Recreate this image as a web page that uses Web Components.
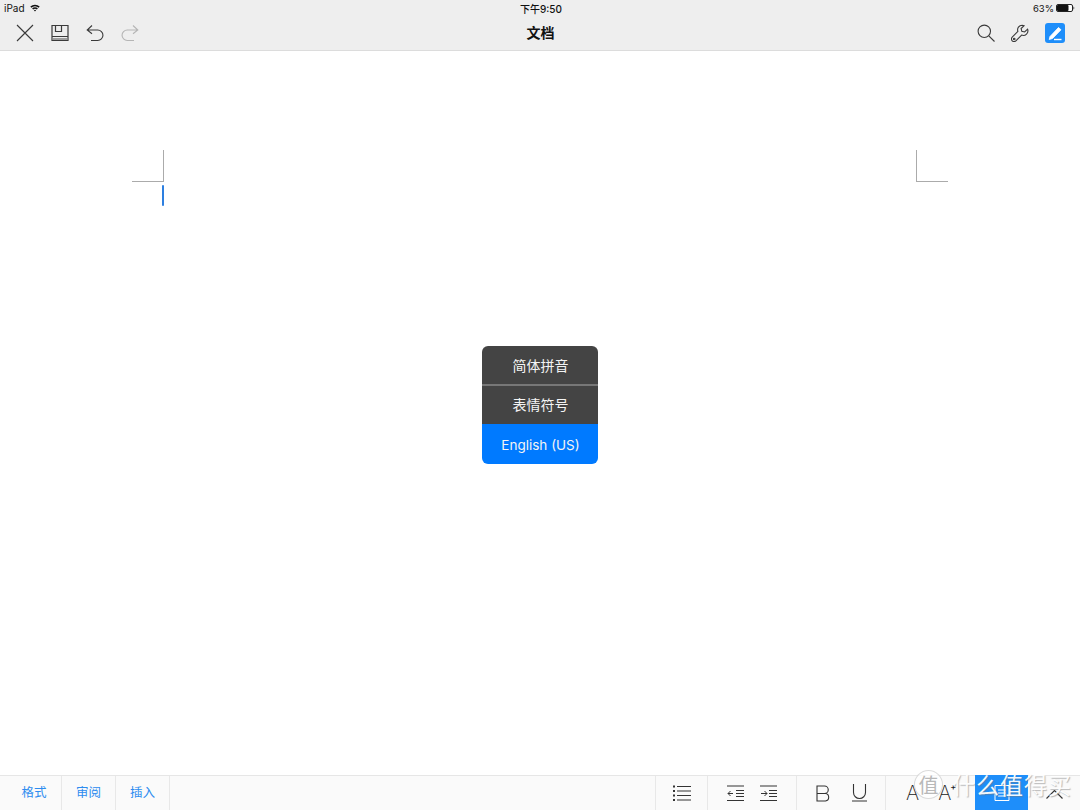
<!DOCTYPE html>
<html><head><meta charset="utf-8"><style>
html,body{margin:0;padding:0;background:#fff;}
body{width:1080px;height:810px;overflow:hidden;font-family:"Liberation Sans","Noto Sans CJK SC",sans-serif;}
</style></head><body>
<doc-app>
</doc-app>
<script>
const FONT='"Liberation Sans","Noto Sans CJK SC",sans-serif';
const UI='Inter,"Noto Sans CJK SC",sans-serif';
class StatusBar extends HTMLElement{constructor(){super();this.attachShadow({mode:'open'}).innerHTML=`<style>
:host{display:grid;grid-template-columns:1fr auto 1fr;align-items:center;height:16px;padding:0 5px 0 4px;font:9.5px ${UI};color:#111;}
.l{display:flex;align-items:center;gap:5px}.r{display:flex;align-items:center;justify-content:flex-end;gap:2px}
.c{font-weight:500;font-size:10px;margin-left:3px}
.i{font-size:10px}
</style><div class="l"><span class="i">iPad</span><svg width="10" height="8" viewBox="0 0 10 8"><path d="M.3 2.600a6.600 6.600 0 0 1 9.400 0L8.600 3.800a5 5 0 0 0-7.200 0zM2.100 4.500a4 4 0 0 1 5.800 0L6.800 5.600a2.500 2.500 0 0 0-3.600 0zM3.900 6.300a1.500 1.500 0 0 1 2.200 0L5 7.600z" fill="#111"/></svg></div>
<div class="c">下午9:50</div>
<div class="r"><span>63%</span><svg width="19" height="8" viewBox="0 0 19 8"><rect x=".5" y=".5" width="16" height="7" rx="1.500" fill="#fff" stroke="#222"/><rect x="1" y="1" width="11.500" height="6" rx="1" fill="#111"/><path d="M17.500 2.500c1 .2 1 2.800 0 3z" fill="#222"/></svg></div>`}}
customElements.define('status-bar',StatusBar);

class TopBar extends HTMLElement{constructor(){super();this.attachShadow({mode:'open'}).innerHTML=`<style>
:host{display:block;box-sizing:border-box;height:51px;background:#eeeeee;border-bottom:1px solid #dcdcdc;flex:none;}
.row{display:grid;grid-template-columns:1fr auto 1fr;align-items:center;height:34px;}
.l,.r{display:flex;align-items:center;}
.l{gap:17px;padding-left:16px}.r{justify-content:flex-end;padding-right:15px}
.t{font:700 14px ${FONT};color:#111;margin:0 0 2px 1px;}
svg{display:block;fill:none;stroke:#3a3a3a;stroke-width:1.1}
.pen{width:20px;height:20px;background:#1e8efa;border-radius:3px;margin-left:16px}
.wr{margin-left:16px}
</style><status-bar></status-bar><div class="row"><div class="l">
<svg width="18" height="18" viewBox="0 0 18 18"><path d="M1 1l16 16M17 1L1 17"/></svg>
<svg width="18" height="18" viewBox="0 0 18 18"><path d="M1 1.500h16v15H1zM1 12.500h16M4.500 1.500v6h6v-6" stroke-width="1.200"/><path d="M2 15h14" stroke-width=".9"/></svg>
<svg width="18" height="18" viewBox="0 0 18 18"><path d="M6 1.500L1.200 6 6 9.800M1.200 6h10.500a5 5 0 0 1 0 10.500H5"/></svg>
<svg width="18" height="18" viewBox="0 0 18 18" style="stroke:#b5b5b5"><path d="M12 1.500L16.800 6 12 9.800M16.800 6H6.300a5 5 0 0 0 0 10.500H13"/></svg>
</div><div class="t">文档</div><div class="r">
<svg width="18" height="18" viewBox="0 0 18 18"><circle cx="7.300" cy="7.300" r="6.200"/><path d="M11.800 11.800l5.700 5.700"/></svg>
<svg class="wr" width="18" height="18" viewBox="0 0 18 18"><path d="M11.200 1.200a4.600 4.600 0 0 0-4.300 6.200L1.200 13.100a2.600 2.600 0 0 0 3.700 3.700l5.700-5.700a4.600 4.600 0 0 0 6-5.900l-3 2.800-2.800-.7-.7-2.800 3-2.800a4.700 4.700 0 0 0-1.900-.5z"/><circle cx="3.200" cy="15" r=".8"/></svg>
<div class="pen"><svg width="20" height="20" viewBox="0 0 20 20" style="stroke:#fff"><path d="M5 13.500L13.500 4.500l2.500 2.300L7.500 15.500l-3.300 1z" fill="#fff" stroke-width=".8"/><path d="M9 16.500h7.500" stroke-width="1.400"/></svg></div>
</div></div>`}}
customElements.define('top-bar',TopBar);

class DocPage extends HTMLElement{constructor(){super();this.attachShadow({mode:'open'}).innerHTML=`<style>
:host{display:block;flex:1;min-height:0;background:#fff;box-sizing:border-box;padding:99px 132px 0;}
.marks{display:flex;justify-content:space-between;}
.m{box-sizing:border-box;width:32px;height:32px;border-bottom:1px solid #ababab;}
.a{border-right:1px solid #ababab}.b{border-left:1px solid #ababab}
.cur{width:2px;height:21px;margin:3px 0 0 30px;background:#2d7fe0;border-radius:1px;}
</style><div class="marks"><div class="m a"></div><div class="m b"></div></div><div class="cur"></div>`}}
customElements.define('doc-page',DocPage);

class LangMenu extends HTMLElement{constructor(){super();this.attachShadow({mode:'open'}).innerHTML=`<style>
:host{position:absolute;left:482px;top:346px;width:116px;border-radius:6px;overflow:hidden;display:block;font:14px ${UI};color:#f4f4f4;}
div{display:flex;align-items:center;justify-content:center;box-sizing:border-box;padding-left:1px;}
.d{background:#444;}
.one{height:40px;border-bottom:2px solid #777}
.two{height:38px;padding-bottom:2px}
.sel{background:#007aff;height:40px;font-size:13.5px;padding-top:2px}
</style><div class="d one">简体拼音</div><div class="d two">表情符号</div><div class="sel">English (US)</div>`}}
customElements.define('lang-menu',LangMenu);

class BottomBar extends HTMLElement{constructor(){super();this.attachShadow({mode:'open'}).innerHTML=`<style>
:host{display:flex;box-sizing:border-box;height:35px;flex:none;background:#fafafa;border-top:1px solid #e6e6e6;font:12.5px ${FONT};color:#2d8cf0;}
.tab{display:flex;align-items:center;justify-content:center;box-sizing:border-box;border-right:1px solid #e8e8e8;padding-bottom:4px;}
.sp{flex:1;border-right:1px solid #e8e8e8}
.grp{display:flex;align-items:center;justify-content:center;box-sizing:border-box;border-right:1px solid #e8e8e8;}
svg{display:block;fill:none;stroke:#333;stroke-width:1}
.blue{width:53px;height:35px;margin-top:-1px;background:#1e8efa;display:flex;align-items:center;justify-content:center;}
.as{width:89px;display:flex;align-items:center;padding:0 0 0 20px;box-sizing:border-box;gap:19px}
.a{font:200 20px Inter,sans-serif;color:#222;position:relative;line-height:1;}
.a sup{position:absolute;left:12px;top:-1px;font-size:9px;font-weight:500;line-height:1}
.ch{width:52px;display:flex;justify-content:center;align-items:center;padding-top:3px}
</style>
<div class="tab" style="width:62px;padding-left:7px">格式</div><div class="tab" style="width:54px">审阅</div><div class="tab" style="width:54px">插入</div><div class="sp"></div>
<div class="grp" style="width:52px"><svg width="18" height="17" viewBox="0 0 18 17"><path d="M4 1.500h14M4 6h14M4 10.500h14M4 15h14"/><path d="M0 1.500h2M0 6h2M0 10.500h2M0 15h2" stroke-width="1.800"/></svg></div>
<div class="grp" style="width:89px;gap:16px"><svg width="17" height="17" viewBox="0 0 17 17"><path d="M0 1h17M9 5.500h8M9 8.500h8M9 11.500h8M0 15.500h17M6 8.500H1M3.500 6L1 8.500 3.500 11"/></svg><svg width="17" height="17" viewBox="0 0 17 17"><path d="M0 1h17M9 5.500h8M9 8.500h8M9 11.500h8M0 15.500h17M1 8.500h6M4.500 6L7 8.500 4.500 11"/></svg></div>
<div class="grp" style="width:89px;gap:21px"><svg width="15" height="17" viewBox="0 0 15 17"><path d="M1 1h7.500a3.700 3.700 0 0 1 0 7.500H1zM1 8.500h8.500a3.800 3.800 0 0 1 0 7.500H1z" stroke-width="1.100"/></svg><svg width="15" height="18" viewBox="0 0 15 18"><path d="M1.500 0v8.500a6 6 0 0 0 12 0V0M0 17h15" stroke-width="1.100"/></svg></div>
<div class="as"><span class="a">A</span><span class="a">A<sup>+</sup></span></div>
<div class="blue"><svg width="16" height="16" viewBox="0 0 16 16" style="stroke:#fff"><path d="M1 .5h14v15H1zM4 5h8M4 8h8M4 11h8"/></svg></div>
<div class="ch"><svg width="17" height="9" viewBox="0 0 17 9" style="stroke-width:1.100"><path d="M.5 8.500l8-8 8 8"/></svg></div>`}}
customElements.define('bottom-bar',BottomBar);

class WaterMark extends HTMLElement{constructor(){super();this.attachShadow({mode:'open'}).innerHTML=`<style>
:host{position:absolute;right:8px;bottom:11px;display:flex;align-items:center;gap:9px;color:rgba(255,255,255,.95);font:400 23px "Noto Sans CJK SC",sans-serif;line-height:1;}
.c{box-sizing:border-box;width:29px;height:29px;border-radius:50%;background:rgba(255,255,255,.72);border:1px solid rgba(190,190,190,.55);display:flex;align-items:center;justify-content:center;font-size:20px;color:#b8b8b8;}
.w{letter-spacing:1px;text-shadow:1px 1px 1px rgba(120,120,120,.5);}
</style><div class="c">值</div><div class="w">什么值得买</div>`}}
customElements.define('water-mark',WaterMark);

class DocApp extends HTMLElement{constructor(){super();this.attachShadow({mode:'open'}).innerHTML=`<style>
:host{display:flex;flex-direction:column;width:1080px;height:810px;position:relative;overflow:hidden;}
</style><top-bar></top-bar><doc-page></doc-page><bottom-bar></bottom-bar><lang-menu></lang-menu><water-mark></water-mark>`}}
customElements.define('doc-app',DocApp);
</script>
</body></html>
